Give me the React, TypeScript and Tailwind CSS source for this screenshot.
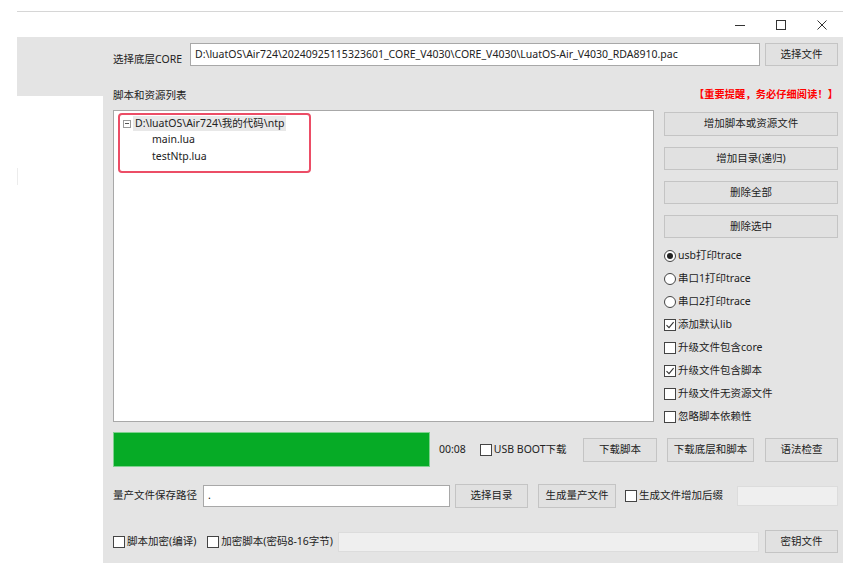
import React from "react";

const Btn = ({ children, w, h = "h-[23px]", cls = "" }: { children: React.ReactNode; w: string; h?: string; cls?: string }) => (
  <div className={`${w} ${h} ${cls} shrink-0 flex items-center justify-center border border-[#c4c4c4] bg-[#e1e1e1] text-[10.5px] text-[#222]`}>
    {children}
  </div>
);

const Check = ({ checked = false }: { checked?: boolean }) => (
  <span className="w-[12px] h-[12px] shrink-0 border border-[#444] bg-white flex items-center justify-center">
    {checked && (
      <svg width="10" height="10" viewBox="0 0 10 10">
        <path d="M1.5 5.2 L4 7.6 L8.6 2.2" fill="none" stroke="#333" strokeWidth="1.1" />
      </svg>
    )}
  </span>
);

const Radio = ({ checked = false }: { checked?: boolean }) => (
  <span className="w-[12px] h-[12px] shrink-0 rounded-full border border-[#444] bg-white flex items-center justify-center">
    {checked && <span className="w-[6px] h-[6px] rounded-full bg-[#222]" />}
  </span>
);

const OptRow = ({ children }: { children: React.ReactNode }) => (
  <div className="h-[23px] flex items-center gap-[2px] text-[10.5px] text-[#222]">{children}</div>
);

export default function App() {
  return (
    <div className="w-[862px] h-[580px] bg-white relative overflow-hidden font-['Noto_Sans','Noto_Sans_CJK_SC',sans-serif] text-[#222]">
      {/* top line */}
      <div className="h-[11px]" />
      <div className="ml-[17px] w-[826px] h-px bg-[#d6d6d6]" />
      {/* title bar */}
      <div className="ml-[17px] w-[826px] h-[25px] flex items-center justify-end">
        <svg width="12" height="12" viewBox="0 0 12 12" className="mr-[29px]">
          <path d="M1 6.5 H11" stroke="#333" strokeWidth="1" />
        </svg>
        <svg width="12" height="12" viewBox="0 0 12 12" className="mr-[29px]">
          <rect x="1.5" y="1.5" width="9" height="9" fill="none" stroke="#333" strokeWidth="1" />
        </svg>
        <svg width="12" height="12" viewBox="0 0 12 12" className="mr-[15px]">
          <path d="M1.5 1.5 L10.5 10.5 M10.5 1.5 L1.5 10.5" stroke="#333" strokeWidth="1" />
        </svg>
      </div>
      {/* body */}
      <div className="flex ml-[17px]">
        <div className="w-[86px] flex flex-col">
          <div className="h-[59px] bg-[#e4e4e4]" />
          <div className="h-[72px]" />
          <div className="w-px h-[17px] bg-[#ececec]" />
        </div>
        <div className="w-[740px] h-[526px] bg-[#e4e4e4] pl-[10px] pr-[5px] flex flex-col">
          {/* row 1 */}
          <div className="mt-[6px] h-[23px] flex items-center">
            <div className="w-[77px] text-[10.5px] pt-[10px]">选择底层CORE</div>
            <div className="w-[570px] h-[23px] bg-white border border-[#a8a8a8] flex items-center pl-[4px] text-[10.5px] whitespace-nowrap overflow-hidden">
              D:\luatOS\Air724\20240925115323601_CORE_V4030\CORE_V4030\LuatOS-Air_V4030_RDA8910.pac
            </div>
            <Btn w="w-[73px]" cls="ml-[5px]">选择文件</Btn>
          </div>
          {/* row 2 */}
          <div className="mt-[22px] h-[14px] flex items-center justify-between">
            <div className="text-[10.5px] pt-[2px]">脚本和资源列表</div>
            <div className="text-[10.2px] font-bold text-[#ff0000] mr-[0px] tracking-[0.1px]">【重要提醒，务必仔细阅读！】</div>
          </div>
          {/* row 3 */}
          <div className="mt-[8px] h-[312px] flex items-start">
            <div className="w-[541px] h-[312px] bg-white border border-[#a8a8a8] relative">
              <div className="pt-[5px] flex flex-col text-[10.5px]">
                <div className="h-[15px] flex items-center">
                  <span className="ml-[9px] w-[8px] h-[8px] border border-[#9a9a9a] flex items-center justify-center">
                    <span className="w-[4px] h-px bg-[#555]" />
                  </span>
                  <span className="ml-[2px] px-[2px] bg-[#e8e8e8] h-[15px] flex items-center">D:\luatOS\Air724\我的代码\ntp</span>
                </div>
                <div className="h-[17px] flex items-center pl-[38px]">main.lua</div>
                <div className="h-[17px] flex items-center pl-[38px]">testNtp.lua</div>
              </div>
              <div className="absolute left-[4px] top-[2px] w-[193px] h-[60px] border-2 border-[#ec4d66] rounded-[4px]" />
            </div>
            <div className="ml-[10px] w-[174px] flex flex-col pt-[2px]">
              <div className="flex flex-col gap-[11px]">
                <Btn w="w-[174px]" h="h-[24px]">增加脚本或资源文件</Btn>
                <Btn w="w-[174px]" h="h-[23px]">增加目录(递归)</Btn>
                <Btn w="w-[174px]" h="h-[23px]">删除全部</Btn>
                <Btn w="w-[174px]" h="h-[23px]">删除选中</Btn>
              </div>
              <div className="mt-[6px] flex flex-col">
                <OptRow><Radio checked /><span>usb打印trace</span></OptRow>
                <OptRow><Radio /><span>串口1打印trace</span></OptRow>
                <OptRow><Radio /><span>串口2打印trace</span></OptRow>
                <OptRow><Check checked /><span>添加默认lib</span></OptRow>
                <OptRow><Check /><span>升级文件包含core</span></OptRow>
                <OptRow><Check checked /><span>升级文件包含脚本</span></OptRow>
                <OptRow><Check /><span>升级文件无资源文件</span></OptRow>
                <OptRow><Check /><span>忽略脚本依赖性</span></OptRow>
              </div>
            </div>
          </div>
          {/* row 4 */}
          <div className="mt-[10px] h-[35px] flex items-center">
            <div className="w-[317px] h-[35px] bg-[#06ab26] border border-[#7fd18f]" />
            <span className="ml-[9px] text-[10.5px]">00:08</span>
            <span className="ml-[14px] flex items-center gap-[2px] text-[10.5px]"><Check /><span>USB BOOT下载</span></span>
            <Btn w="w-[74px]" h="h-[24px]" cls="ml-auto">下载脚本</Btn>
            <Btn w="w-[87px]" h="h-[24px]" cls="ml-[10px]">下载底层和脚本</Btn>
            <Btn w="w-[73px]" h="h-[24px]" cls="ml-[11px]">语法检查</Btn>
          </div>
          {/* row 5 */}
          <div className="mt-[17px] h-[24px] flex items-center">
            <div className="w-[90px] text-[10.5px]">量产文件保存路径</div>
            <div className="w-[247px] h-[22px] bg-white border border-[#a8a8a8] flex items-center pl-[4px] text-[10.5px]">.</div>
            <Btn w="w-[73px]" h="h-[24px]" cls="ml-[5px]">选择目录</Btn>
            <Btn w="w-[78px]" h="h-[24px]" cls="ml-[10px]">生成量产文件</Btn>
            <span className="ml-[9px] flex items-center gap-[2px] text-[10.5px]"><Check /><span>生成文件增加后缀</span></span>
            <div className="ml-auto w-[101px] h-[20px] bg-[#efefef] border border-[#dcdcdc]" />
          </div>
          {/* row 6 */}
          <div className="mt-[22px] h-[23px] flex items-center">
            <span className="flex items-center gap-[2px] text-[10.5px]"><Check /><span>脚本加密(编译)</span></span>
            <span className="ml-[11px] flex items-center gap-[2px] text-[10.5px]"><Check /><span>加密脚本(密码8-16字节)</span></span>
            <div className="ml-auto w-[421px] h-[20px] bg-[#efefef] border border-[#dcdcdc]" />
            <Btn w="w-[73px]" h="h-[23px]" cls="ml-[6px]">密钥文件</Btn>
          </div>
        </div>
      </div>
    </div>
  );
}
